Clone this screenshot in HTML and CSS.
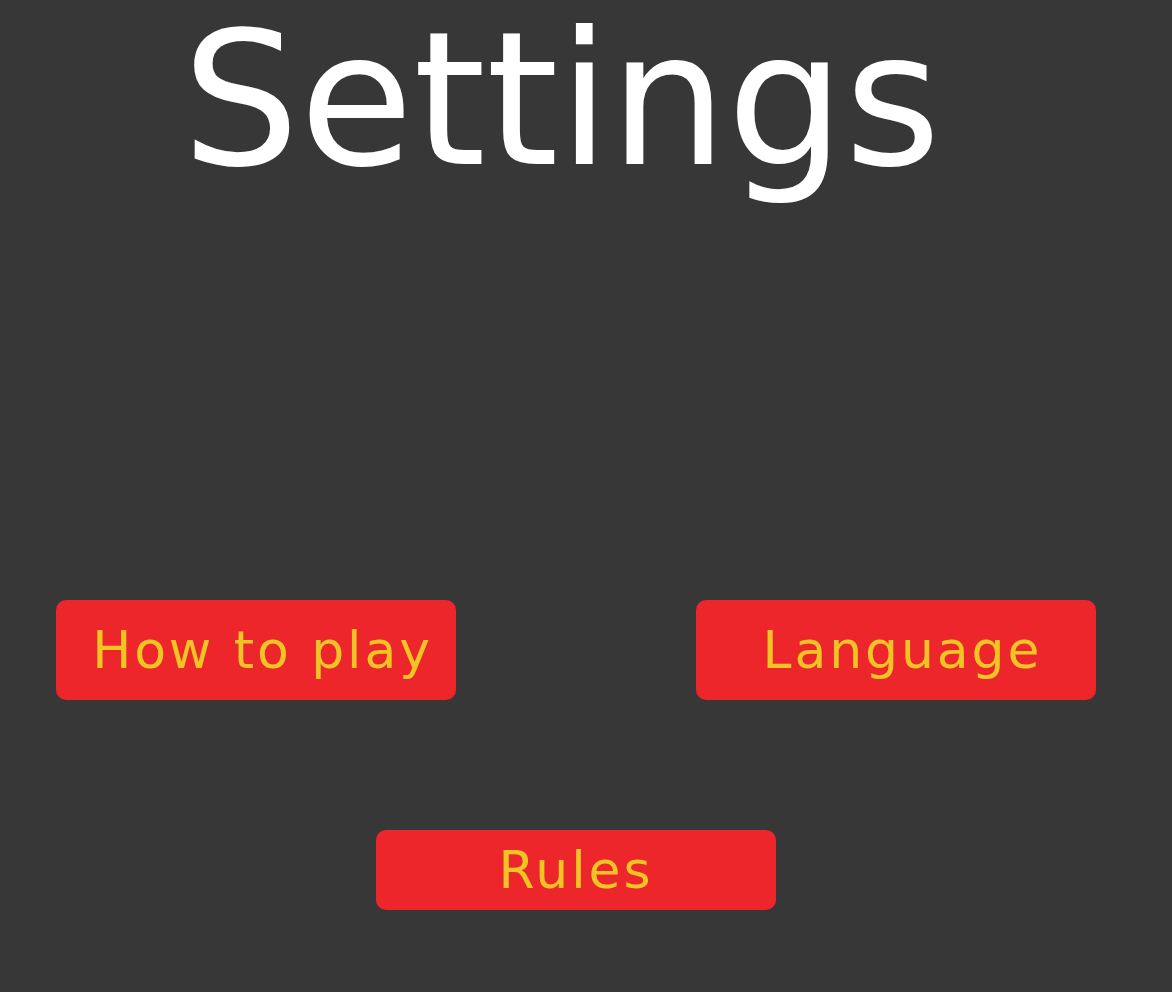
FILE: index.html
```html
<!DOCTYPE html>
<html>
<head>
<meta charset="utf-8">
<link rel="stylesheet" href="styles.css">
</head>
<body>
<div class="screen">
  <h1 class="title">Settings</h1>
  <div class="row">
    <button class="btn btn-shift">How to play</button>
    <button class="btn btn-shift">Language</button>
  </div>
  <div class="row-center">
    <button class="btn btn-small">Rules</button>
  </div>
</div>
</body>
</html>
```
FILE: styles.css
```css
html, body {
  margin: 0;
  padding: 0;
  background: #373737;
}
.screen {
  width: 1172px;
  height: 992px;
  display: flex;
  flex-direction: column;
  font-family: "DejaVu Sans", "Liberation Sans", sans-serif;
}
.title {
  margin: -8px 0 0 0;
  height: 216px;
  padding-right: 49px;
  text-align: center;
  color: #ffffff;
  font-weight: normal;
  font-size: 185px;
  line-height: normal;
}
.row {
  margin-top: 392px;
  padding-left: 56px;
  display: flex;
  gap: 240px;
}
.row-center {
  margin-top: 130px;
  padding-right: 20px;
  display: flex;
  justify-content: center;
}
.btn {
  width: 400px;
  height: 100px;
  border: none;
  border-radius: 10px;
  background: #ec262b;
  color: #f0c424;
  font-family: "DejaVu Sans", "Liberation Sans", sans-serif;
  font-size: 52px;
  letter-spacing: 2.9px;
  line-height: 1;
  padding: 0;
  display: flex;
  align-items: center;
  justify-content: center;
}
.btn-shift {
  padding-left: 13px;
}
.btn-small {
  height: 80px;
}
```
